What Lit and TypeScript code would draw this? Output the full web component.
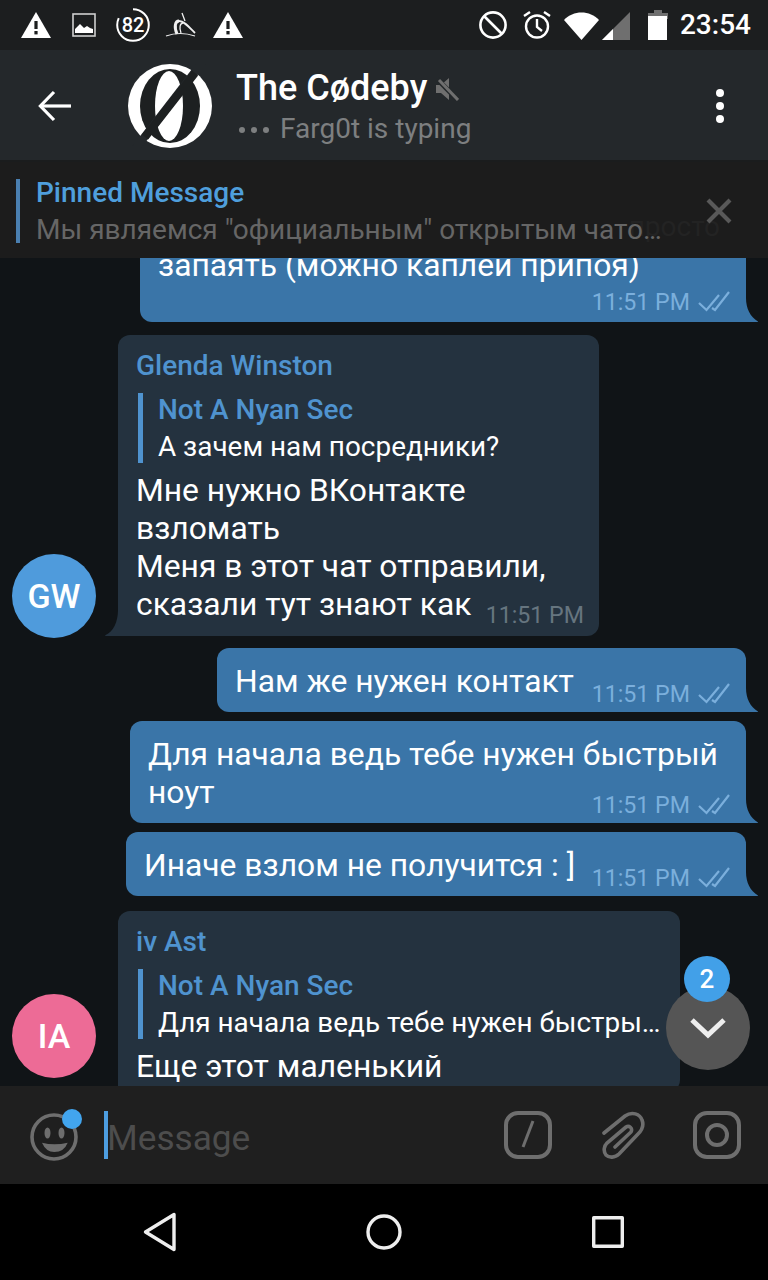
import { LitElement, html, css, svg, nothing } from "lit";
import { customElement } from "lit/decorators.js";

interface Msg {
  out: boolean;
  width: number;
  name?: string;
  reply?: [string, string];
  lines: string[];
  last: string;
  gap: number;
  avatar?: string;
  clipped?: boolean;
}

const MSGS: Msg[] = [
  { out: true, width: 606, lines: ["запаять (можно каплей припоя)"], last: "", gap: 70 },
  {
    out: false, width: 481, name: "Glenda Winston", reply: ["Not A Nyan Sec", "А зачем нам посредники?"],
    lines: ["Мне нужно ВКонтакте", "взломать", "Меня в этот чат отправили,"], last: "сказали тут знают как", avatar: "GW", gap: 13,
  },
  { out: true, width: 529, lines: [], last: "Нам же нужен контакт", gap: 12 },
  { out: true, width: 616, lines: ["Для начала ведь тебе нужен быстрый"], last: "ноут", gap: 9 },
  { out: true, width: 620, lines: [], last: "Иначе взлом не получится : ]", gap: 9 },
  {
    out: false, width: 562, name: "iv Ast", reply: ["Not A Nyan Sec", "Для начала ведь тебе нужен быстры…"],
    lines: ["Еще этот маленький"], last: "", clipped: true, gap: 15,
  },
];

const checks = svg`<svg class="chk" width="34" height="22" viewBox="0 0 34 22" fill="none" stroke="#7bafdc" stroke-width="2.2"><path d="M2 12l7.500 7L22 4"/><path d="M15 17l3 2L32 1"/></svg>`;

const warn = svg`<svg width="32" height="28" viewBox="0 0 32 28"><path fill="#fff" d="M16 1L31 27H1z"/><rect x="14.4" y="10" width="3.2" height="8" fill="#1c1e1f"/><rect x="14.4" y="20" width="3.2" height="3.4" fill="#1c1e1f"/></svg>`;

@customElement("app-root")
export class AppRoot extends LitElement {
  static styles = css`
    :host { display: block; width: 768px; height: 1280px; overflow: hidden; font-family: Roboto, "Noto Sans", sans-serif; background: #000; }
    .page { display: flex; flex-direction: column; height: 1280px; }
    .status { height: 50px; flex: none; background: #1c1e1f; display: flex; align-items: center; padding: 0 17px 0 20px; color: #fff; }
    .status svg { display: block; flex: none; }
    .status .sp { flex: 1; }
    .clock { font-size: 28px; font-weight: 500; margin-left: 12px; line-height: 50px; }
    .header { height: 112px; flex: none; background: #24282b; display: flex; align-items: center; padding: 2px 44px 0 38px; border-bottom: 2px solid #1a1c1d; box-sizing: border-box; }
    .titles { margin-left: 24px; flex: 1; display: flex; flex-direction: column; margin-top: 1px; }
    .title { display: flex; align-items: center; font-size: 36px; font-weight: 500; color: #fff; line-height: 44px; }
    .title svg { margin-left: 8px; margin-top: 2px; }
    .sub { display: flex; align-items: center; font-size: 28px; color: #7d7f80; line-height: 36px; margin-top: 1px; }
    .dots { display: flex; gap: 6px; margin: 2px 11px 0 3px; }
    .dots i { width: 6px; height: 6px; border-radius: 50%; background: #7d7f80; }
    .kebab { display: flex; flex-direction: column; gap: 5px; }
    .kebab i { width: 8px; height: 8px; border-radius: 50%; background: #fff; }
    .avatar-main { margin-left: 56px; flex: none; display: block; }
    .chat { flex: 1; position: relative; background: #101417; overflow: hidden; }
    .list { display: flex; flex-direction: column; }
    .row { display: flex; align-items: flex-end; flex: none; }
    .row.out { justify-content: flex-end; padding-right: 22px; }
    .row.in { padding-left: 118px; position: relative; }
    .av { position: absolute; left: 12px; bottom: -2px; width: 84px; height: 84px; border-radius: 50%; display: flex; align-items: center; justify-content: center; color: #fff; font-size: 34px; font-weight: 500; }
    .av.gw { background: #4f9bdc; }
    .av.ia { background: #ed6b96; bottom: 8px; }
    .bubble { position: relative; box-sizing: border-box; padding: 14px 15px 6px 18px; border-radius: 12px; color: #fff; font-size: 31.8px; line-height: 38px; white-space: nowrap; }
    .bubble.o { background: #3a75a8; border-bottom-right-radius: 0; }
    .bubble.i { background: #24323f; border-bottom-left-radius: 0; padding-bottom: 7px; }
    .tail { position: absolute; bottom: 0; }
    .tail.o { right: -12px; }
    .tail.i { left: -13px; }
    .last { display: flex; justify-content: space-between; align-items: flex-end; }
    .last .tx { margin-bottom: 6px; }
    .last.empty { justify-content: flex-end; padding-top: 4px; }
    .last.empty .meta { margin-bottom: 2px; }
    .meta { display: flex; align-items: center; gap: 7px; font-size: 23.2px; line-height: 24px; padding-top: 2px; color: #7bafdc; white-space: nowrap; }
    .meta.in { color: #66757f; margin-bottom: 2px; }
    .nm { font-size: 28px; font-weight: 500; color: #4f93cf; line-height: 34px; margin-bottom: 10px; }
    .reply { border-left: 5px solid #4f93cf; padding-left: 15px; margin: 0 0 8px 2px; font-size: 28px; }
    .reply .rn { font-weight: 500; color: #4f93cf; line-height: 34px; }
    .reply .rt { color: #fff; line-height: 32px; margin-top: 4px; white-space: nowrap; font-size: 27.9px; }
    .pinned { position: absolute; left: 0; right: 0; top: 0; height: 96px; background: #1c1c1c; display: flex; align-items: center; padding: 2px 36px 0 16px; box-sizing: border-box; }
    .pbar { width: 4px; height: 64px; background: #4a7fb0; flex: none; }
    .ptexts { flex: 1; margin-left: 16px; position: relative; z-index: 1; }
    .ptitle { font-size: 28px; font-weight: 500; color: #4f9fdc; line-height: 36px; }
    .ptext { font-size: 28px; color: #666; line-height: 36px; white-space: nowrap; margin-top: 1px; }
    .ghost { position: absolute; right: 48px; top: 48px; font-size: 28px; color: #232323; white-space: nowrap; }
    .close { position: relative; display: block; }
    .fab { position: absolute; right: 18px; bottom: 16px; width: 84px; height: 84px; border-radius: 50%; background: #555; display: flex; align-items: center; justify-content: center; }
    .badge { position: absolute; left: 18px; top: -30px; width: 46px; height: 46px; border-radius: 50%; background: #42a0e8; color: #fff; font-size: 26px; font-weight: 500; display: flex; align-items: center; justify-content: center; }
    .input { height: 98px; flex: none; background: #1f1f1f; display: flex; align-items: center; padding-left: 30px; padding-right: 27px; }
    .emoji { position: relative; flex: none; width: 48px; height: 48px; margin-top: 4px; }
    .emoji svg { display: block; }
    .dot { position: absolute; left: 32px; top: -4px; width: 20px; height: 20px; border-radius: 50%; background: #42a5ee; }
    .caret { width: 4px; height: 48px; background: #4d9de0; margin-left: 26px; flex: none; }
    .ph { flex: 1; font-size: 35.2px; color: #4d4d4d; line-height: 48px; padding-top: 6px; margin-left: -1px; }
    .ic { display: block; flex: none; }
    .ic.clip { margin-left: 49px; }
    .ic.cam { margin-left: 44px; }
    .nav { height: 96px; flex: none; background: #000; display: flex; align-items: center; justify-content: center; }
    .nav div { width: 224px; display: flex; justify-content: center; }
  `;

  private bubble(m: Msg) {
    const side = m.out ? "o" : "i";
    return html`<div class="bubble ${side}" style="width:${m.width}px">
      ${m.name ? html`<div class="nm">${m.name}</div>` : nothing}
      ${m.reply ? html`<div class="reply"><div class="rn">${m.reply[0]}</div><div class="rt">${m.reply[1]}</div></div>` : nothing}
      ${m.lines.map((l) => html`<div>${l}</div>`)}
      ${m.clipped ? nothing : html`<div class="last ${m.last ? "" : "empty"}">${m.last ? html`<span class="tx">${m.last}</span>` : nothing}
        <span class="meta ${m.out ? "" : "in"}">11:51 PM${m.out ? checks : nothing}</span></div>`}
      ${m.clipped ? nothing : m.out
        ? svg`<svg class="tail o" width="13" height="24" viewBox="0 0 13 24"><path fill="#3a75a8" d="M0 0h1c0 10 4 19 12 23.4 0 .4-.4.6-1 .6H0z"/></svg>`
        : svg`<svg class="tail i" width="14" height="26" viewBox="0 0 14 26"><path fill="#24323f" d="M14 0v26H1c-1 0-1-.6-.4-1C8 22 13 12 13 0z"/></svg>`}
    </div>`;
  }

  render() {
    return html`<div class="page">
      <div class="status">
        ${warn}
        <svg style="margin-left:20px" width="24" height="24" viewBox="0 0 24 24"><rect x="1" y="1" width="22" height="22" fill="none" stroke="#cfcfcf" stroke-width="1.6"/><path fill="#fff" d="M3 20v-4l5-5 4 4 3-2 3 2 3 1v4z"/></svg>
        <svg style="margin-left:19px" width="36" height="36" viewBox="0 0 36 36"><circle cx="18" cy="18" r="15.8" fill="none" stroke="#fff" stroke-width="2" stroke-dasharray="81 100" transform="rotate(-90 18 18)"/><text x="18" y="25" text-anchor="middle" font-family="Roboto" font-size="20" font-weight="500" fill="#fff">82</text></svg>
        <svg style="margin-left:12px" width="36" height="30" viewBox="0 0 36 30" fill="none" stroke="#f0f0f0"><path d="M3 26Q17 21 32 26" stroke-width="1.2"/><path d="M14 24C11 17 12 11 16 11" stroke-width="3"/><path d="M16 11C21 11 26 17 32 23" stroke-width="1.8"/><path d="M19 3l3 8M20 13c-3 0-4 5-2 10" stroke-width="1.300"/></svg>
        <span style="width:13px;flex:none"></span>
        ${warn}
        <span class="sp"></span>
        <svg width="30" height="30" viewBox="0 0 30 30" fill="none" stroke="#fff" stroke-width="2.6"><circle cx="15" cy="15" r="12.6"/><path d="M6 6l18 18"/></svg>
        <svg style="margin-left:14px" width="30" height="30" viewBox="0 0 30 30" fill="none" stroke="#fff" stroke-width="2.4"><circle cx="15" cy="16.5" r="11"/><path d="M15 9v8l5 4"/><path d="M2 6l6-4M28 6l-6-4"/></svg>
        <svg style="margin-left:12px;margin-top:1px" width="68" height="30" viewBox="0 0 68 30"><path fill="#fff" d="M0 9C9-1 26-1 35 9L17.5 29z"/><path fill="#6f6f6f" d="M66 1v28H38z"/><path fill="#fff" d="M38 29l11-11v11z"/></svg>
        <svg style="margin-left:16px" width="20" height="30" viewBox="0 0 20 30"><path fill="#6f6f6f" d="M0 3h6V0h8v3h6v6H0z"/><rect y="6" width="19" height="24" fill="#fff"/></svg>
        <span class="clock">23:54</span>
      </div>
      <div class="header">
        <svg width="34" height="32" viewBox="0 0 34 32" fill="none" stroke="#fff" stroke-width="3.2"><path d="M33 16H3"/><path d="M16 2L2.4 16 16 30"/></svg>
        <svg class="avatar-main" width="84" height="84" viewBox="0 0 84 84"><circle cx="42" cy="42" r="42" fill="#fff"/><ellipse cx="42" cy="42" rx="30" ry="37" fill="#1d2021"/><ellipse cx="41" cy="42" rx="14" ry="35" fill="#fff"/><path d="M8 84L76-4" stroke="#24282b" stroke-width="8"/><path d="M17 73L67 9" stroke="#1d2021" stroke-width="8"/></svg>
        <div class="titles">
          <div class="title">The Cødeby<svg width="24" height="24" viewBox="0 0 24 24"><path fill="#6f6f6f" d="M1 8h5l8-7v22l-8-7H1z"/><path d="M2 2l21 21" stroke="#24282b" stroke-width="5"/><path d="M4 3l19 20" stroke="#6f6f6f" stroke-width="3"/></svg></div>
          <div class="sub"><span class="dots"><i></i><i></i><i></i></span>Farg0t is typing</div>
        </div>
        <div class="kebab"><i></i><i></i><i></i></div>
      </div>
      <div class="chat">
        <div class="list">
          ${MSGS.map((m) => html`<div class="row ${m.out ? "out" : "in"}" style="margin-top:${m.gap}px">
            ${m.avatar === "GW" ? html`<div class="av gw">GW</div>` : nothing}
            ${this.bubble(m)}
          </div>`)}
        </div>
        <div class="av ia">IA</div>
        <div class="pinned">
          <span class="ghost">просто</span>
          <div class="pbar"></div>
          <div class="ptexts">
            <div class="ptitle">Pinned Message</div>
            <div class="ptext">Мы являемся "официальным" открытым чато…</div>
          </div>
          <svg class="close" width="26" height="26" viewBox="0 0 26 26" stroke="#595959" stroke-width="4.2"><path d="M2 2l22 22M24 2L2 24"/></svg>
        </div>
        <div class="fab">
          <svg width="36" height="22" viewBox="0 0 36 22" fill="none" stroke="#eee" stroke-width="5"><path d="M2 3l16 15L34 3"/></svg>
          <div class="badge">2</div>
        </div>
      </div>
      <div class="input">
        <div class="emoji">
          <svg width="48" height="48" viewBox="0 0 48 48"><circle cx="24" cy="24" r="22" fill="none" stroke="#6e6e6e" stroke-width="3.6"/><ellipse cx="17.5" cy="20" rx="3" ry="5.500" fill="#6e6e6e"/><ellipse cx="31.5" cy="20" rx="3" ry="5.500" fill="#6e6e6e"/><path fill="#6e6e6e" d="M12 29.700Q24.300 33 37.700 29.700Q34 39 24.300 39Q16 39 12 29.700z"/></svg>
          <div class="dot"></div>
        </div>
        <div class="caret"></div>
        <div class="ph">Message</div>
        <svg class="ic" width="48" height="48" viewBox="0 0 48 48" fill="none" stroke="#6e6e6e" stroke-width="4"><rect x="2" y="2" width="44" height="44" rx="12"/><path d="M29 10L19 36" stroke-width="3"/></svg>
        <svg class="ic clip" width="48" height="48" viewBox="0 0 48 48" fill="none" stroke="#6e6e6e" stroke-width="3.600" stroke-linecap="round"><path d="M3 22L24 5C31 0 39 3 41 9C43 14 41 19 37 23L18 43C14 47 8 47 5 44C2 40 3 35 6 32L25 16C28 14 32 17 30 21L14 36"/></svg>
        <svg class="ic cam" width="48" height="48" viewBox="0 0 48 48" fill="none" stroke="#6e6e6e" stroke-width="4"><rect x="2" y="2" width="44" height="44" rx="12"/><circle cx="24" cy="24" r="10"/></svg>
      </div>
      <div class="nav">
        <div><svg width="34" height="40" viewBox="0 0 34 40" fill="none" stroke="#eee" stroke-width="3.4" stroke-linejoin="round"><path d="M31 2.500V37.500L2.500 20z"/></svg></div>
        <div><svg width="36" height="36" viewBox="0 0 36 36" fill="none" stroke="#eee" stroke-width="3.400"><circle cx="18" cy="18" r="16"/></svg></div>
        <div><svg width="32" height="32" viewBox="0 0 32 32" fill="none" stroke="#eee" stroke-width="3.400" stroke-linejoin="round"><rect x="1.700" y="1.700" width="28.600" height="28.600"/></svg></div>
      </div>
    </div>`;
  }
}
